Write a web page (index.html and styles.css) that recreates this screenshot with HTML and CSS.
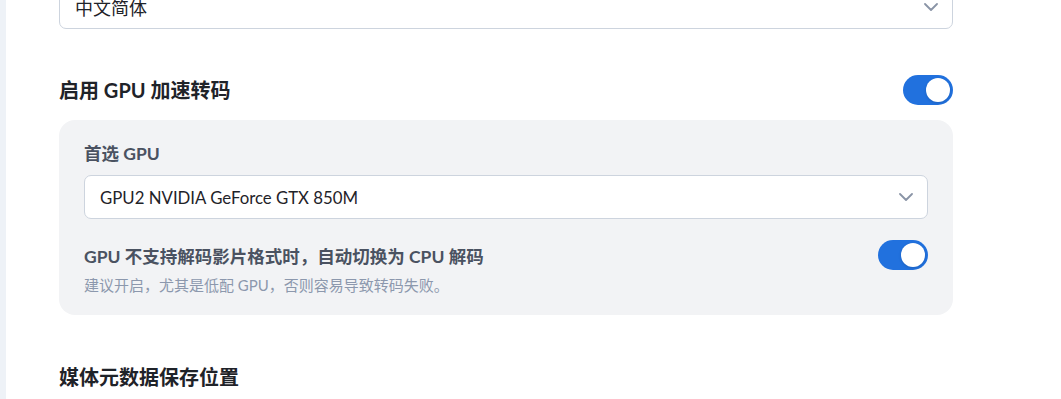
FILE: index.html
```html
<!DOCTYPE html>
<html lang="zh-CN">
<head>
<meta charset="utf-8">
<link rel="stylesheet" href="styles.css">
</head>
<body>
<div class="page">
  <aside class="rail"></aside>
  <main class="content">
    <div class="select select-top">
      <span>中文简体</span>
      <svg class="chev" viewBox="0 0 14 8" width="14" height="8"><path d="M1 1l6 6 6-6" fill="none" stroke="#8a94a6" stroke-width="1.8" stroke-linecap="round" stroke-linejoin="round"/></svg>
    </div>

    <div class="row head-row">
      <h2 class="title">启用 GPU 加速转码</h2>
      <span class="toggle"><span class="knob"></span></span>
    </div>

    <section class="card">
      <div class="label">首选 GPU</div>
      <div class="select select-gpu">
        <span>GPU2 NVIDIA GeForce GTX 850M</span>
        <svg class="chev" viewBox="0 0 14 8" width="14" height="8"><path d="M1 1l6 6 6-6" fill="none" stroke="#8a94a6" stroke-width="1.8" stroke-linecap="round" stroke-linejoin="round"/></svg>
      </div>
      <div class="row opt-row">
        <div class="opt-text">
          <div class="label">GPU 不支持解码影片格式时，自动切换为 CPU 解码</div>
          <div class="hint">建议开启，尤其是低配 GPU，否则容易导致转码失败。</div>
        </div>
        <span class="toggle"><span class="knob"></span></span>
      </div>
    </section>

    <h2 class="title last">媒体元数据保存位置</h2>
  </main>
</div>
</body>
</html>
```

FILE: styles.css
```css
* { box-sizing: border-box; }
html, body { margin: 0; padding: 0; background: #fff; overflow: hidden; }
body {
  font-family: "Lato", "Noto Sans CJK SC", sans-serif;
  color: #1f2329;
  height: 399px;
}
.page { display: flex; height: 399px; }
.rail { width: 6px; background: #eef2f7; flex: none; }
.content { width: 894px; margin-left: 53px; }

.select {
  height: 44px;
  background: #fff;
  border: 1px solid #cdd4de;
  border-radius: 7px;
  display: flex;
  align-items: center;
  justify-content: space-between;
  padding: 0 14px 0 15px;
  font-size: 18px;
  color: #1f2329;
}
.select-top { margin-top: -15px; }
.select-gpu { font-size: 16.8px; }
.chev { flex: none; }

.row { display: flex; justify-content: space-between; }
.head-row { margin-top: 46px; align-items: center; height: 30px; }
.title {
  margin: 0;
  font-size: 20px;
  font-weight: 700;
  line-height: 28px;
  color: #1f2329;
}
.toggle {
  width: 50px;
  height: 30px;
  border-radius: 15px;
  background: #2171de;
  position: relative;
  flex: none;
}
.knob {
  position: absolute;
  right: 3px;
  top: 3px;
  width: 24px;
  height: 24px;
  border-radius: 50%;
  background: #fff;
  box-shadow: 0 1px 3px rgba(0,0,0,0.15);
}

.card {
  margin-top: 15px;
  background: #f2f3f5;
  border-radius: 16px;
  padding: 22px 25px 20px;
}
.label {
  font-size: 17.5px;
  font-weight: 700;
  line-height: 24px;
  color: #4a5261;
}
.card > .label { margin-bottom: 9px; }
.opt-row { margin-top: 21px; align-items: flex-start; }
.opt-text { padding-top: 5px; }
.hint {
  margin-top: 6px;
  font-size: 15px;
  line-height: 20px;
  color: #8c98ad;
}
.last { margin-top: 48px; }
```
